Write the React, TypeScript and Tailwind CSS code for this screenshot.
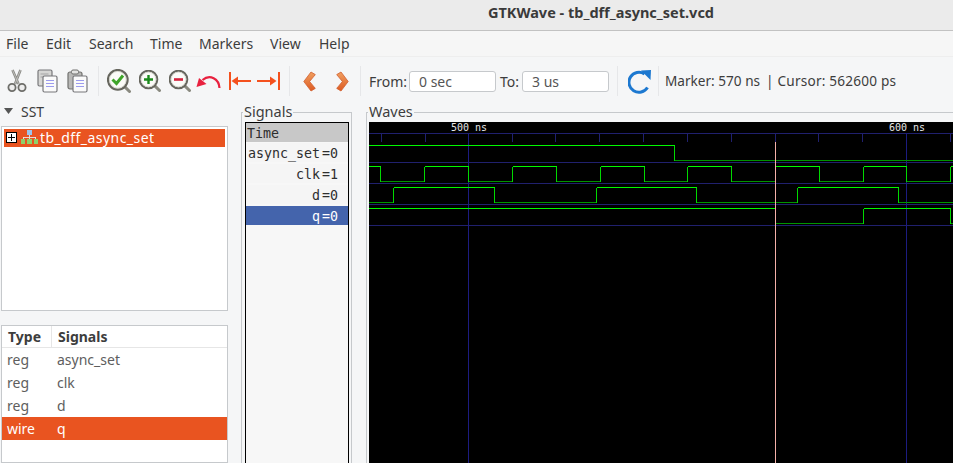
const UI = { fontFamily: '"Noto Sans", sans-serif' };
const MONO = { fontFamily: '"DejaVu Sans Mono", monospace' };

const ticks = [381.5, 425.5, 512, 555.5, 599.5, 643.5, 687.5, 731.5, 775, 818.5, 862.5, 950];
const rows = [162.5, 183.5, 204.5, 225.5];
const HI = "#00f800";
const LO = "#009400";

function Wave({ top, start, edges }: { top: number; start: 0 | 1; edges: number[] }) {
  const yH = top + 0.5;
  const yL = top + 15.5;
  const xs = [369, ...edges, 953];
  let level = start;
  const parts = [];
  for (let i = 0; i < xs.length - 1; i++) {
    parts.push(
      <line key={"h" + i} x1={xs[i]} x2={xs[i + 1]} y1={level ? yH : yL} y2={level ? yH : yL} stroke={level ? HI : LO} strokeWidth="1" />
    );
    if (i < xs.length - 2) {
      parts.push(<line key={"v" + i} x1={xs[i + 1]} x2={xs[i + 1]} y1={yH} y2={yL} stroke="#00d800" strokeWidth="1" />);
    }
    level = level ? 0 : 1;
  }
  return <g>{parts}</g>;
}

function WaveCanvas() {
  return (
    <svg width="584" height="341" viewBox="369 122 584 341" className="block shrink-0" shapeRendering="crispEdges">
      <rect x="369" y="122" width="584" height="341" fill="#000" />
      <line x1="369" x2="953" y1="133.5" y2="133.5" stroke="#20206e" />
      {rows.map((y) => (
        <line key={y} x1="369" x2="953" y1={y} y2={y} stroke="#20206e" />
      ))}
      {ticks.map((x) => (
        <line key={x} x1={Math.floor(x) + 0.5} x2={Math.floor(x) + 0.5} y1="134" y2="142" stroke="#20206e" />
      ))}
      <line x1="468.5" x2="468.5" y1="133" y2="463" stroke="#1c1c80" />
      <line x1="906.5" x2="906.5" y1="133" y2="463" stroke="#1c1c80" />
      <Wave top={145} start={1} edges={[674.5]} />
      <Wave top={166} start={1} edges={[380.5, 424.5, 468.5, 512.5, 556.5, 600.5, 644.5, 687.5, 731.5, 775.5, 819.5, 863.5, 906.5, 950.5]} />
      <Wave top={187} start={0} edges={[393.5, 494.5, 596.5, 696.5, 797.5, 898.5]} />
      <Wave top={208} start={1} edges={[775.5, 863.5, 950.5]} />
      <line x1="775.5" x2="775.5" y1="142" y2="463" stroke="#f4b0a8" />
      <text x="451" y="131" fill="#e6e6e6" fontSize="10" style={MONO} shapeRendering="auto">500 ns</text>
      <text x="889" y="131" fill="#e6e6e6" fontSize="10" style={MONO} shapeRendering="auto">600 ns</text>
    </svg>
  );
}

function Scissors() {
  return (
    <svg width="20" height="24" viewBox="0 0 20 24">
      <path d="M5.5 1 L11.5 15 M13.5 1 L8 15" stroke="#8a8a86" strokeWidth="2.6" fill="none" />
      <path d="M5.5 1 L11.5 15 M13.5 1 L8 15" stroke="#c8c8c4" strokeWidth="0.8" fill="none" />
      <circle cx="5" cy="18.5" r="3.6" fill="#eee" stroke="#6e6e6a" strokeWidth="1.8" />
      <circle cx="15" cy="18.5" r="3.6" fill="#eee" stroke="#6e6e6a" strokeWidth="1.8" />
    </svg>
  );
}

function DocLines({ x, y }: { x: number; y: number }) {
  return (
    <g>
      <rect x={x} y={y} width="14" height="16" rx="1.5" fill="#fafafa" stroke="#77777a" strokeWidth="1.2" />
      <path d={`M${x + 3} ${y + 4.5} h8 M${x + 3} ${y + 7.5} h8 M${x + 3} ${y + 10.5} h8`} stroke="#9c9cee" strokeWidth="1.2" />
    </g>
  );
}

function Copy() {
  return (
    <svg width="21" height="24" viewBox="0 0 21 24">
      <rect x="1" y="1" width="14" height="16" rx="1.5" fill="#d6d6d4" stroke="#77777a" strokeWidth="1.2" />
      <path d="M3.5 5 h8 M3.5 8 h8" stroke="#a5a5a5" strokeWidth="1" />
      <DocLines x={6} y={7} />
    </svg>
  );
}

function Paste() {
  return (
    <svg width="21" height="24" viewBox="0 0 21 24">
      <rect x="1" y="3" width="14" height="17" rx="2" fill="#b8b8b6" stroke="#70706e" strokeWidth="1.2" />
      <rect x="4.5" y="1" width="7" height="4" rx="1.5" fill="#e4e4e2" stroke="#70706e" strokeWidth="1" />
      <DocLines x={6} y={7} />
    </svg>
  );
}

function Lens({ size, children }: { size: number; children?: React.ReactNode }) {
  const r = size === 24 ? 9.8 : 8.8;
  const c = size === 24 ? 10.8 : 9.5;
  return (
    <svg width={size} height={size} viewBox={`0 0 ${size} ${size}`}>
      <line x1={c + r * 0.72} y1={c + r * 0.72} x2={size - 1.5} y2={size - 1.5} stroke="#8a8a80" strokeWidth="3" strokeLinecap="round" />
      <circle cx={c} cy={c} r={r} fill="#fbfbf8" stroke="#66665e" strokeWidth={size === 24 ? 2.2 : 2} />
      <circle cx={c} cy={c} r={r - 1.4} fill="none" stroke="#cfcfc6" strokeWidth="0.8" />
      {children}
    </svg>
  );
}

function Undo() {
  return (
    <svg width="25" height="16" viewBox="0 0 25 16">
      <path d="M23.5 15 C23 6 14 0.5 6.5 7" fill="none" stroke="#e8213f" strokeWidth="2.2" />
      <path d="M0.5 14 L3 5 L10.5 11 Z" fill="#e8213f" />
    </svg>
  );
}

function ArrowBar({ dir }: { dir: "l" | "r" }) {
  return (
    <svg width="23" height="20" viewBox="0 0 23 20" style={dir === "r" ? { transform: "scaleX(-1)" } : undefined} shapeRendering="crispEdges">
      <rect x="0.5" y="1" width="2" height="18" fill="#f4511e" />
      <rect x="8" y="9" width="15" height="2" fill="#f4511e" />
      <path d="M3.5 10 L10 5.5 L10 14.5 Z" fill="#f4511e" shapeRendering="auto" />
    </svg>
  );
}

function Chevron({ dir }: { dir: "l" | "r" }) {
  return (
    <svg width="13" height="21" viewBox="0 0 13 21" style={dir === "r" ? { transform: "scaleX(-1)" } : undefined}>
      <defs>
        <linearGradient id={"chev" + dir} x1="0" y1="0" x2="0" y2="1">
          <stop offset="0" stopColor="#f0a060" />
          <stop offset="1" stopColor="#dd5a22" />
        </linearGradient>
      </defs>
      <path d="M8 1 L12.3 3.6 L6.6 10.5 L12.3 17.4 L8 20 L0.8 10.5 Z" fill={`url(#chev${dir})`} stroke="#d06030" strokeWidth="0.8" strokeLinejoin="round" />
    </svg>
  );
}

function Refresh() {
  return (
    <svg width="24" height="25" viewBox="0 0 24 25">
      <path d="M19.5 18.5 A10 10 0 1 1 16.5 5" fill="none" stroke="#1c78d0" strokeWidth="3" />
      <path d="M13 1.5 L23 1 L22.5 11 Z" fill="#1c78d0" />
    </svg>
  );
}

function Sep() {
  return <div className="w-px h-[30px] bg-[#e6e7e9] shrink-0" />;
}

function TimeInput({ value, className }: { value: string; className: string }) {
  return (
    <div className={"h-[21px] bg-white border border-[#c6c9cc] rounded-[3px] flex items-center pl-[9px] text-[14px] text-[#555] shrink-0 " + className}>
      {value}
    </div>
  );
}

function TreeIcon() {
  return (
    <svg width="17" height="14" viewBox="0 0 19 15" shapeRendering="crispEdges">
      <rect x="7" y="0" width="5" height="5" fill="#9cc4ec" />
      <path d="M9.5 5 V8 M2.5 10 V8 H16.5 V10 M9.5 8 V10" stroke="#e8e8e8" fill="none" />
      <rect x="0" y="10" width="5" height="5" fill="#8fd06a" />
      <rect x="7" y="10" width="5" height="5" fill="#8fd06a" />
      <rect x="14" y="10" width="5" height="5" fill="#8fd06a" />
    </svg>
  );
}

function SignalRow({ name, val, bg, fg = "#2e2e2e" }: { name: string; val: string; bg: string; fg?: string }) {
  return (
    <div className="h-[19px] mb-[2px] flex text-[13.3px] leading-[21px]" style={{ backgroundColor: bg, color: fg }}>
      <div className="w-[74px] text-right shrink-0">{name}</div>
      <div className="pl-[2px]">={val}</div>
    </div>
  );
}

const typeRows = [
  ["reg", "async_set"],
  ["reg", "clk"],
  ["reg", "d"],
];

export default function App() {
  return (
    <div className="w-[953px] h-[463px] overflow-hidden flex flex-col bg-[#f5f6f7] text-[#3d3d3d]" style={UI}>
      {/* title bar */}
      <div className="h-[31px] shrink-0 bg-[#ebebeb] border-b border-[#c2c2c2] flex items-center justify-center pl-[249px] pb-[5px] font-bold text-[14.5px] text-[#3a3a3a]">
        GTKWave - tb_dff_async_set.vcd
      </div>
      {/* menu */}
      <div className="h-[26px] shrink-0 flex items-center pl-[6px] text-[14px] text-[#3d3d3d] bg-[#f6f6f6] border-b border-[#eeeeee]">
        <span className="w-[40px]">File</span>
        <span className="w-[43px]">Edit</span>
        <span className="w-[61px]">Search</span>
        <span className="w-[49px]">Time</span>
        <span className="w-[71px]">Markers</span>
        <span className="w-[49px]">View</span>
        <span>Help</span>
      </div>
      {/* toolbar */}
      <div className="h-[42px] shrink-0 flex items-center pl-[7px] pt-[6px] text-[14px]">
        <div className="w-[30px] shrink-0"><Scissors /></div>
        <div className="w-[30px] shrink-0"><Copy /></div>
        <div className="w-[31px] shrink-0"><Paste /></div>
        <Sep />
        <div className="w-[8px] shrink-0" />
        <div className="w-[32px] shrink-0">
          <Lens size={24}>
            <path d="M5.5 10.5 L9.5 14.5 L16 6.5" fill="none" stroke="#3fa52a" strokeWidth="3" />
          </Lens>
        </div>
        <div className="w-[30px] shrink-0">
          <Lens size={22}>
            <path d="M5 9.5 H14 M9.5 5 V14" stroke="#1b8a1b" strokeWidth="2.4" />
          </Lens>
        </div>
        <div className="w-[27px] shrink-0">
          <Lens size={22}>
            <path d="M5 9.5 H14" stroke="#d5203a" strokeWidth="2.6" />
          </Lens>
        </div>
        <div className="w-[32px] shrink-0"><Undo /></div>
        <div className="w-[29px] shrink-0"><ArrowBar dir="l" /></div>
        <div className="w-[32px] shrink-0"><ArrowBar dir="r" /></div>
        <Sep />
        <div className="w-[13px] shrink-0" />
        <div className="w-[33px] shrink-0"><Chevron dir="l" /></div>
        <div className="w-[24px] shrink-0"><Chevron dir="r" /></div>
        <Sep />
        <span className="ml-[8px] w-[39px] shrink-0">From:</span>
        <TimeInput value="0 sec" className="w-[87px] ml-[1px]" />
        <span className="ml-[4px] w-[22px] shrink-0">To:</span>
        <TimeInput value="3 us" className="w-[87px]" />
        <div className="w-[8px] shrink-0" />
        <Sep />
        <div className="w-[10px] shrink-0" />
        <div className="w-[30px] shrink-0"><Refresh /></div>
        <Sep />
        <span className="ml-[6px] whitespace-nowrap text-[13.6px]">
          Marker: 570 ns<span className="ml-[6px] mr-[4px]">|</span><span className="tracking-[0.2px]">Cursor: 562600 ps</span>
        </span>
      </div>
      {/* main */}
      <div className="flex-1 min-h-0 flex">
        {/* left column */}
        <div className="w-[241px] shrink-0 flex flex-col pl-[1px]">
          <div className="h-[27px] shrink-0 flex items-center pl-[3px] text-[14px]">
            <svg width="9" height="6" viewBox="0 0 9 6" className="mr-[8px] -mt-[3px]"><path d="M0 0 H9 L4.5 6 Z" fill="#555" /></svg>
            <span className="-mt-[2px]">SST</span>
          </div>
          <div className="w-[227px] h-[185px] shrink-0 bg-white border border-[#c6c9cc] p-[2px]">
            <div className="h-[18px] pb-[2px] bg-[#e95420] flex items-center text-white text-[14px] tracking-[0.45px]">
              <div className="w-[11px] h-[11px] ml-[2px] mr-[4px] bg-white border border-black flex items-center justify-center shrink-0">
                <svg width="7" height="7" viewBox="0 0 7 7" shapeRendering="crispEdges"><path d="M0 3.5 H7 M3.5 0 V7" stroke="#000" /></svg>
              </div>
              <TreeIcon />
              <span className="ml-[2px] whitespace-nowrap">tb_dff_async_set</span>
            </div>
          </div>
          <div className="h-[14px] shrink-0" />
          <div className="w-[227px] flex-1 min-h-0 bg-white border border-[#c6c9cc] text-[14px] text-[#5e5e5e]">
            <div className="h-[22px] flex items-stretch font-bold text-[#3d3d3d] border-b border-[#e6e6e6]">
              <div className="w-[50px] flex items-center pl-[6px] border-r border-[#e6e6e6]">Type</div>
              <div className="flex items-center pl-[6px]">Signals</div>
            </div>
            {typeRows.map(([t, s]) => (
              <div key={s} className="h-[23px] flex items-center">
                <div className="w-[55px] pl-[5px]">{t}</div>
                <div>{s}</div>
              </div>
            ))}
            <div className="h-[23px] flex items-center bg-[#e95420] text-white">
              <div className="w-[55px] pl-[5px]">wire</div>
              <div>q</div>
            </div>
          </div>
        </div>
        {/* signals */}
        <div className="w-[125px] shrink-0 relative pt-[13px]">
          <div className="h-full w-[111px] border-l border-r border-t border-[#c6c9cc] pl-[3px] pr-[2px] pt-[9px]">
            <div className="h-full w-[104px] bg-[#f7f7f7] border-l border-r border-t border-black" style={MONO}>
              <div className="h-[19px] mb-[1px] bg-[#c8c8c8] text-[13.3px] leading-[22px] text-[#2e2e2e] pl-[1px]">Time</div>
              <SignalRow name="async_set" val="0" bg="#f5f5f5" />
              <SignalRow name="clk" val="1" bg="#f5f5f5" />
              <SignalRow name="d" val="0" bg="#f5f5f5" />
              <SignalRow name="q" val="0" bg="#4464ac" fg="#ffffff" />
            </div>
          </div>
          <span className="absolute left-[2px] top-[2px] bg-[#f5f6f7] px-[1px] text-[14.5px] leading-[20px]">Signals</span>
        </div>
        {/* waves */}
        <div className="flex-1 min-w-0 relative pt-[13px]">
          <div className="h-full border-l border-t border-[#c6c9cc] pl-[2px] pt-[9px] overflow-hidden">
            <WaveCanvas />
          </div>
          <span className="absolute left-[2px] top-[2px] bg-[#f5f6f7] px-[1px] text-[14.5px] leading-[20px]">Waves</span>
        </div>
      </div>
    </div>
  );
}
